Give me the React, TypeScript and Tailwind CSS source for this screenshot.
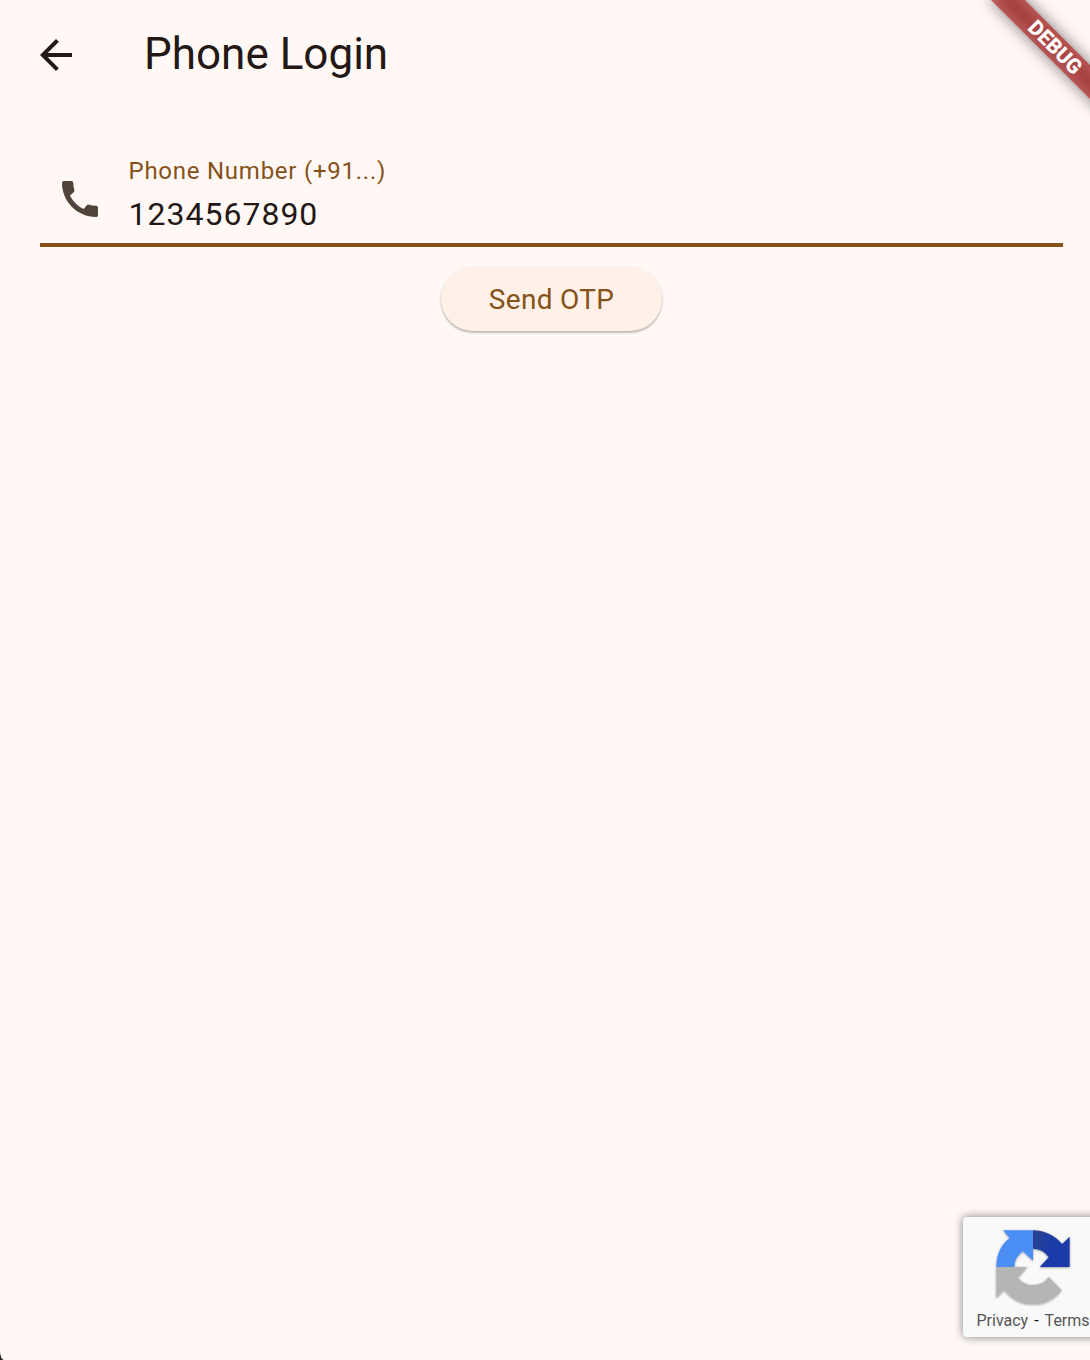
function BackIcon() {
  return (
    <svg viewBox="0 0 24 24" className="size-12 fill-[#231815]" aria-hidden="true">
      <path d="M20 11H7.83l5.59-5.59L12 4l-8 8 8 8 1.41-1.41L7.83 13H20v-2z" />
    </svg>
  );
}

function PhoneIcon() {
  return (
    <svg viewBox="0 0 24 24" className="size-12 fill-[#51443a]" aria-hidden="true">
      <path d="M20.01 15.38c-1.23 0-2.42-.2-3.53-.56-.35-.12-.74-.03-1.01.24l-1.57 1.97c-2.83-1.35-5.48-3.9-6.89-6.83l1.95-1.66c.27-.28.35-.67.24-1.02-.37-1.11-.56-2.3-.56-3.53 0-.54-.45-.99-.99-.99H4.19C3.65 3 3 3.24 3 3.99 3 13.28 10.73 21 20.01 21c.71 0 .99-.63.99-1.18v-3.45c0-.54-.45-.99-.99-.99z" />
    </svg>
  );
}

function RecaptchaLogo() {
  return (
    <svg viewBox="39 51 381 273" className="h-[91px] w-[127px] shrink-0" aria-hidden="true">
      <defs>
        <linearGradient id="navy" x1="249" y1="130" x2="300" y2="150" gradientUnits="userSpaceOnUse">
          <stop offset="0" stopColor="#2a4290" />
          <stop offset="1" stopColor="#1c3aa9" />
        </linearGradient>
        <filter id="soft" x="-10%" y="-10%" width="120%" height="125%">
          <feDropShadow dx="0" dy="2" stdDeviation="2.5" floodOpacity="0.4" />
        </filter>
      </defs>
      <g filter="url(#soft)">
        <path fill="#b5b5b5" d="M139 201H231L204 233Q220 255 249 255Q280 255 296 231L335 270Q302 313 249 313Q196 313 162 270L139 294Z" />
        <path fill="#4c8ff5" d="M249 91H159L179 114Q139 145 139 201H193Q194 171 219 154L249 182Z" />
        <path fill="url(#navy)" d="M249 91Q304 93 336 132L359 110V201H269L296 172Q280 147 249 146Z" />
      </g>
    </svg>
  );
}

function DebugBanner() {
  return (
    <div className="pointer-events-none absolute top-[36px] left-[976px] h-6 w-40 rotate-45">
      <div className="absolute inset-0 bg-black/50 blur-[8px]" />
      <div className="relative flex h-full items-center justify-center bg-[#b71c1c]/63 pr-[2px] text-[20.4px] leading-6 font-bold tracking-[0.3px] text-white [-webkit-text-stroke:0.4px_white]">
        DEBUG
      </div>
    </div>
  );
}

export default function App() {
  return (
    <div className="relative h-[1360px] w-full overflow-hidden bg-[#2b2625] font-['Roboto',sans-serif]">
      <div className="relative h-full w-[1103px] rounded-bl-[4px_9px] bg-[#fff8f5]">
        <header className="flex h-28 items-center pl-8">
          <button type="button" aria-label="Back" className="mt-[-2px] flex size-12 items-center justify-center">
            <BackIcon />
          </button>
          <h1 className="mt-[-4px] ml-16 text-[44px] leading-[56px] text-[#231815]">Phone Login</h1>
        </header>

        <main className="px-10 pt-[39px]">
          <div className="flex h-24 items-center border-b-4 border-[#865219]">
            <div className="mt-1 flex w-[88.5px] justify-start pl-4">
              <PhoneIcon />
            </div>
            <label className="flex flex-1 flex-col">
              <span className="text-2xl leading-8 tracking-[0.75px] text-[#865219]">Phone Number (+91...)</span>
              <input
                type="tel"
                defaultValue="1234567890"
                className="mt-[3px] mb-px h-12 w-full bg-transparent text-[32px] leading-[48px] tracking-[1px] text-[#231815] outline-none"
              />
            </label>
          </div>
          <div className="mt-5 flex justify-center">
            <button
              type="button"
              className="h-16 w-[221px] rounded-full bg-[#fff1e7] pt-[2px] text-[28px] tracking-[0.3px] text-[#865219] shadow-[0_2px_2px_rgba(0,0,0,0.2),0_1px_3px_rgba(0,0,0,0.1)]"
            >
              Send OTP
            </button>
          </div>
        </main>
      </div>

      <DebugBanner />

      <aside className="absolute top-[1217px] left-[963px] h-[120px] w-[512px] rounded-[4px] bg-[#f9f9f9] shadow-[0_0_10px_gray]">
        <RecaptchaLogo />
        <div className="flex w-[127px] gap-[6px] pt-1 pl-[13.5px] text-base leading-[18px] whitespace-nowrap text-[#555]">
          <span>Privacy</span>
          <span className="text-black">-</span>
          <span>Terms</span>
        </div>
      </aside>
    </div>
  );
}
